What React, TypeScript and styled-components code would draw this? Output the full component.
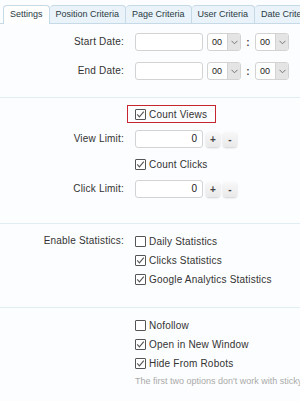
import React from 'react';
import styled, { createGlobalStyle } from 'styled-components';

const GlobalStyle = createGlobalStyle`
  html, body {
    margin: 0;
    padding: 0;
    background: #fcfdfe;
  }
  body {
    font-family: "Liberation Sans", Arial, sans-serif;
    color: #222;
  }
`;

const Page = styled.div`
  width: 300px;
  height: 401px;
  overflow: hidden;
  background: #fcfdfe;
`;

const TabBar = styled.div`
  display: flex;
  padding: 5px 0 0 3px;
  border-bottom: 1px solid #c6d9e6;
  white-space: nowrap;
`;

const Tab = styled.div<{ $active?: boolean }>`
  flex: none;
  line-height: 17px;
  padding: 0 6px;
  font-size: 9px;
  color: #2b3a44;
  border: 1px solid #c6d9e6;
  border-bottom: none;
  border-left: ${p => (p.$active ? '1px solid #c6d9e6' : 'none')};
  border-radius: 4px 4px 0 0;
  background: ${p => (p.$active ? '#ffffff' : '#e9f3f9')};
  margin-bottom: ${p => (p.$active ? '-1px' : '0')};
  height: ${p => (p.$active ? '18px' : '17px')};
`;

const Section = styled.div<{ $pt: number; $pb: number; $gap: number }>`
  display: flex;
  flex-direction: column;
  gap: ${p => p.$gap}px;
  padding: ${p => p.$pt}px 0 ${p => p.$pb}px;
  border-bottom: 1px solid #e0eef3;

  &:last-child {
    border-bottom: none;
  }
`;

const Row = styled.div`
  display: grid;
  grid-template-columns: 124px 1fr;
  column-gap: 11px;
  align-items: start;
  min-height: 18px;
`;

const Label = styled.div`
  text-align: right;
  font-size: 10px;
  line-height: 18px;
  letter-spacing: 0.2px;
  color: #333;
`;

const Controls = styled.div<{ $stack?: boolean }>`
  display: flex;
  flex-direction: ${p => (p.$stack ? 'column' : 'row')};
  align-items: ${p => (p.$stack ? 'flex-start' : 'center')};
  gap: ${p => (p.$stack ? '1px' : '0')};
`;

const TextBox = styled.div<{ $align?: string }>`
  box-sizing: border-box;
  width: 68px;
  height: 18px;
  border: 1px solid #d3d3d3;
  border-radius: 3px;
  background: #fff;
  font-size: 10px;
  line-height: 16px;
  padding: 0 5px;
  text-align: ${p => p.$align || 'left'};
  color: #222;
`;

const Select = styled.div<{ $first?: boolean }>`
  box-sizing: border-box;
  display: flex;
  width: 34px;
  height: 18px;
  border: 1px solid #d3d3d3;
  border-radius: 3px;
  background: #fff;
  overflow: hidden;
  margin-left: ${p => (p.$first ? '4px' : '0')};
`;

const SelectValue = styled.span`
  flex: 1;
  font-size: 9px;
  line-height: 16px;
  padding-left: 4px;
  color: #222;
`;

const SelectArrow = styled.span`
  display: flex;
  align-items: center;
  justify-content: center;
  width: 12px;
  background: #e4e4e4;
  border-left: 1px solid #d3d3d3;
`;

const Colon = styled.span`
  font-size: 10px;
  font-weight: bold;
  color: #444;
  width: 14px;
  text-align: center;
`;

const StepButton = styled.span`
  box-sizing: border-box;
  display: inline-flex;
  align-items: center;
  justify-content: center;
  width: 14px;
  height: 15px;
  margin-left: 3px;
  border-radius: 3px;
  background: linear-gradient(#f8f8f8, #e9e9e9);
  box-shadow: 0 1px 2px rgba(0, 0, 0, 0.18);
  font-size: 10px;
  font-weight: bold;
  color: #444;
`;

const CheckRow = styled.label<{ $highlight?: boolean }>`
  display: inline-flex;
  align-items: center;
  gap: 3px;
  height: 18px;
  font-size: 10px;
  letter-spacing: 0.2px;
  color: #333;
  white-space: nowrap;
  box-sizing: border-box;
  margin-left: ${p => (p.$highlight ? '-8px' : '0')};
  padding: ${p => (p.$highlight ? '0 8px 0 7px' : '0')};
  border: ${p => (p.$highlight ? '1px solid #c8262e' : 'none')};
`;

const Box = styled.span`
  box-sizing: border-box;
  display: inline-flex;
  align-items: center;
  justify-content: center;
  width: 11px;
  height: 11px;
  border: 1px solid #555;
  border-radius: 1px;
  background: #fff;
`;

const Note = styled.div`
  font-size: 9px;
  color: #aaa;
  white-space: nowrap;
  margin-top: 3px;
`;

const Chevron = () => (
  <svg width="7" height="5" viewBox="0 0 7 5">
    <polyline points="0.5,0.8 3.5,3.8 6.5,0.8" fill="none" stroke="#777" strokeWidth="1" />
  </svg>
);

const Check: React.FC<{ label: string; checked?: boolean; highlight?: boolean }> = ({ label, checked, highlight }) => (
  <CheckRow $highlight={highlight}>
    <Box>
      {checked ? (
        <svg width="9" height="9" viewBox="0 0 9 9">
          <polyline points="1.2,4.4 3.4,6.8 7.8,1.6" fill="none" stroke="#555" strokeWidth="1.1" />
        </svg>
      ) : null}
    </Box>
    {label}
  </CheckRow>
);

const TimeSelects = () => (
  <>
    <Select $first>
      <SelectValue>00</SelectValue>
      <SelectArrow><Chevron /></SelectArrow>
    </Select>
    <Colon>:</Colon>
    <Select>
      <SelectValue>00</SelectValue>
      <SelectArrow><Chevron /></SelectArrow>
    </Select>
  </>
);

const tabs = ['Settings', 'Position Criteria', 'Page Criteria', 'User Criteria', 'Date Criteria'];

export default function App() {
  return (
    <Page>
      <GlobalStyle />
      <TabBar>
        {tabs.map((t, i) => (
          <Tab key={t} $active={i === 0}>{t}</Tab>
        ))}
      </TabBar>

      <Section $pt={9} $pb={17} $gap={11}>
        <Row>
          <Label>Start Date:</Label>
          <Controls>
            <TextBox />
            <TimeSelects />
          </Controls>
        </Row>
        <Row>
          <Label>End Date:</Label>
          <Controls>
            <TextBox />
            <TimeSelects />
          </Controls>
        </Row>
      </Section>

      <Section $pt={7} $pb={25} $gap={7}>
        <Row>
          <Label />
          <Controls>
            <Check label="Count Views" checked highlight />
          </Controls>
        </Row>
        <Row>
          <Label>View Limit:</Label>
          <Controls>
            <TextBox $align="right">0</TextBox>
            <StepButton>+</StepButton>
            <StepButton>-</StepButton>
          </Controls>
        </Row>
        <Row>
          <Label />
          <Controls>
            <Check label="Count Clicks" checked />
          </Controls>
        </Row>
        <Row>
          <Label>Click Limit:</Label>
          <Controls>
            <TextBox $align="right">0</TextBox>
            <StepButton>+</StepButton>
            <StepButton>-</StepButton>
          </Controls>
        </Row>
      </Section>

      <Section $pt={8} $pb={19} $gap={0}>
        <Row>
          <Label>Enable Statistics:</Label>
          <Controls $stack>
            <Check label="Daily Statistics" />
            <Check label="Clicks Statistics" checked />
            <Check label="Google Analytics Statistics" checked />
          </Controls>
        </Row>
      </Section>

      <Section $pt={8} $pb={10} $gap={0}>
        <Row>
          <Label />
          <Controls $stack>
            <Check label="Nofollow" />
            <Check label="Open in New Window" checked />
            <Check label="Hide From Robots" checked />
            <Note>The first two options don't work with sticky ads.</Note>
          </Controls>
        </Row>
      </Section>
    </Page>
  );
}
